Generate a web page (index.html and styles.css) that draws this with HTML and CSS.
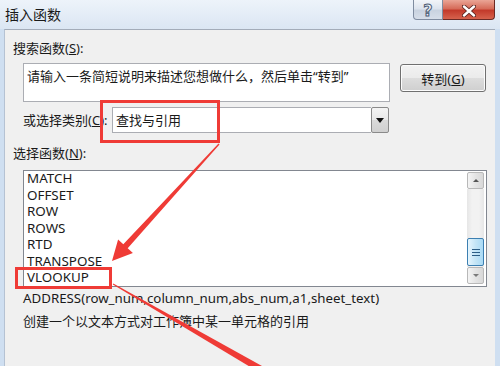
FILE: index.html
```html
<!DOCTYPE html>
<html lang="zh-CN">
<head>
  <meta charset="UTF-8" />
  <title>插入函数</title>
  <link rel="stylesheet" href="styles.css">
</head>
<body>
  <div class="window">
    <div class="titlebar">
      <span class="title">插入函数</span>
      <div class="caption-buttons">
        <div class="help-btn">?</div>
        <div class="close-btn">
          <svg width="14" height="12" viewBox="0 0 14 12">
            <path d="M2 1.5 L12 10.5 M12 1.5 L2 10.5" stroke="#5a2420" stroke-width="4.2" stroke-linecap="round" fill="none"/>
            <path d="M2 1.5 L12 10.5 M12 1.5 L2 10.5" stroke="#fff" stroke-width="2.4" stroke-linecap="round" fill="none"/>
          </svg>
        </div>
      </div>
    </div>

    <div class="panel">
      <div class="label">搜索函数(<u>S</u>):</div>
      <div class="search-row">
        <div class="search-box">请输入一条简短说明来描述您想做什么，然后单击“转到”</div>
        <button class="go-btn">转到(<u>G</u>)</button>
      </div>

      <div class="category-row">
        <span class="sub-label">或选择类别(<u>C</u>):</span>
        <div class="combo">
          <span class="combo-text">查找与引用</span>
          <div class="combo-drop"><span class="tri-down"></span></div>
        </div>
      </div>

      <div class="label label-fn">选择函数(<u>N</u>):</div>
      <div class="listbox">
        <ul class="fn-list">
          <li>MATCH</li>
          <li>OFFSET</li>
          <li>ROW</li>
          <li>ROWS</li>
          <li>RTD</li>
          <li>TRANSPOSE</li>
          <li>VLOOKUP</li>
        </ul>
        <div class="scrollbar">
          <div class="sb-btn"><span class="tri-up"></span></div>
          <div class="sb-track">
            <div class="sb-thumb"><span></span><span></span><span></span></div>
          </div>
          <div class="sb-btn"><span class="tri-down small"></span></div>
        </div>
      </div>

      <div class="signature">ADDRESS(row_num,column_num,abs_num,a1,sheet_text)</div>
      <div class="desc">创建一个以文本方式对工作簿中某一单元格的引用</div>
    </div>

    <!-- red annotation marks drawn over the dialog -->
    <svg class="marks" width="500" height="366" viewBox="0 0 500 366">
      <rect x="101.5" y="101.5" width="117" height="40" fill="none" stroke="#ef3b36" stroke-width="3"/>
      <rect x="16.5" y="268.5" width="94" height="19" fill="none" stroke="#ef3b36" stroke-width="3"/>
      <polygon fill="#ef3b36" points="219.5,144.5 127.7,248.2 132.9,252.9 112,261 118.1,239.5 123.3,244.2 218.5,143.5"/>
      <polygon fill="#ef3b36" points="112.8,284.4 260.3,373 263.8,367 113.3,283.6"/>
    </svg>
  </div>
</body>
</html>
```

FILE: styles.css
```css
* {
  box-sizing: border-box;
}

body {
  margin: 0;
  width: 500px;
  height: 366px;
  overflow: hidden;
  background: #cfdff1;
  font-family: "Noto Sans", "Noto Sans CJK SC", sans-serif;
  font-size: 13px;
  color: #1a1a1a;
}

.window {
  position: relative;
  height: 366px;
  display: flex;
  flex-direction: column;
}

.titlebar {
  height: 29px;
  flex: none;
  display: flex;
  justify-content: space-between;
  align-items: flex-start;
  background: linear-gradient(#edf3fa, #dbe6f3);
}

.title {
  font-size: 14px;
  line-height: 30px;
  padding-left: 5px;
}

.caption-buttons {
  display: flex;
  margin-right: 5px;
}

.help-btn {
  width: 30px;
  height: 20px;
  border: 1px solid #7f8ca0;
  border-top: none;
  border-radius: 0 0 0 4px;
  background: linear-gradient(#f2f5f9, #dde4ee 45%, #c9d3e0 55%, #d6dee9);
  text-align: center;
  font-family: "DejaVu Sans", sans-serif;
  font-weight: bold;
  font-size: 16px;
  line-height: 21px;
  color: #eef2f7;
  -webkit-text-stroke: 1px #4c5d75;
}

.close-btn {
  width: 52px;
  height: 20px;
  border: 1px solid #6b2a25;
  border-top: none;
  border-left: none;
  border-radius: 0 0 4px 0;
  background: linear-gradient(#eaa596, #d66c5a 45%, #c33a2b 55%, #d6624d);
  display: flex;
  align-items: center;
  justify-content: center;
  padding-top: 2px;
}

.panel {
  flex: 1;
  margin: 0 5px 0 4px;
  background: #f0f0f0;
  border-top: 1px solid #a3acb9;
  border-left: 1px solid #b5c2d3;
  padding: 10px 8px 0 8px;
}

.label {
  line-height: 17px;
}

.search-row {
  display: flex;
  align-items: flex-start;
  margin: 6px 0 0 10px;
}

.search-box {
  width: 367px;
  height: 39px;
  border: 1px solid #abadb3;
  background: #fff;
  padding: 4px 3px;
  line-height: 17px;
}

.go-btn {
  margin: 1px 0 0 10px;
  width: 86px;
  height: 28px;
  border: 1px solid #707070;
  border-radius: 3px;
  background: linear-gradient(#f2f2f2, #ebebeb 50%, #dddddd 50%, #cfcfcf);
  box-shadow: inset 0 0 0 1px #fcfcfc;
  font-family: inherit;
  font-size: 13px;
  color: #1a1a1a;
  padding: 0;
}

.category-row {
  display: flex;
  align-items: center;
  margin: 5px 0 0 10px;
}

.sub-label {
  width: 89px;
  line-height: 17px;
}

.combo {
  display: flex;
  width: 277px;
  height: 26px;
}

.combo-text {
  flex: 1;
  background: #fff;
  border: 1px solid #abadb3;
  border-right: none;
  padding-left: 3px;
  line-height: 24px;
}

.combo-drop {
  width: 18px;
  border: 1px solid #8a8a8a;
  border-radius: 2px;
  background: linear-gradient(#f4f4f4, #e8e8e8 50%, #dadada 50%, #d0d0d0);
  display: flex;
  align-items: center;
  justify-content: center;
}

.tri-down {
  width: 0;
  height: 0;
  border-left: 4px solid transparent;
  border-right: 4px solid transparent;
  border-top: 5px solid #111;
}

.tri-down.small {
  border-top-color: #7a7a7a;
  border-left-width: 3px;
  border-right-width: 3px;
  border-top-width: 3px;
}

.tri-up {
  width: 0;
  height: 0;
  border-left: 3px solid transparent;
  border-right: 3px solid transparent;
  border-bottom: 3px solid #555;
}

.label-fn {
  margin-top: 11px;
  line-height: 18px;
}

.listbox {
  display: flex;
  height: 117px;
  margin: 8px 0 0 10px;
  border: 1px solid #828790;
  background: #fff;
}

.fn-list {
  flex: 1;
  list-style: none;
  margin: -1px 0 0 0;
  padding: 0 0 0 3px;
  font-size: 13.4px;
}

.fn-list li {
  line-height: 16.5px;
}

.scrollbar {
  width: 17px;
  margin: 1px 2px 2px 0;
  display: flex;
  flex-direction: column;
}

.sb-btn {
  height: 17px;
  flex: none;
  border: 1px solid #b8b8b8;
  border-radius: 2px;
  background: linear-gradient(to right, #f4f4f4, #e4e4e4 50%, #d8d8d8);
  display: flex;
  align-items: center;
  justify-content: center;
}

.sb-track {
  flex: 1;
  display: flex;
  flex-direction: column;
  justify-content: flex-end;
  background: linear-gradient(to right, #e6e6e6, #f2f2f2 30%, #f2f2f2 70%, #e6e6e6);
}

.sb-thumb {
  height: 28px;
  margin-bottom: 1px;
  border: 1px solid #3c7fb1;
  border-radius: 2px;
  background: linear-gradient(to right, #e6f5fd, #c4e5f6 50%, #a9daf5);
  display: flex;
  flex-direction: column;
  align-items: center;
  justify-content: center;
  gap: 2px;
}

.sb-thumb span {
  width: 8px;
  height: 1px;
  background: #2c5e86;
}

.signature {
  margin: 3px 0 0 10px;
  line-height: 17px;
  font-size: 13.3px;
}

.desc {
  margin: 6px 0 0 10px;
  line-height: 17px;
}

.marks {
  position: absolute;
  left: 0;
  top: 0;
  pointer-events: none;
}
```
